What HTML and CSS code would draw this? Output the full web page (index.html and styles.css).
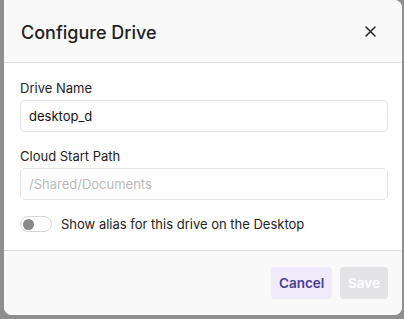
FILE: index.html
```html
<!DOCTYPE html>
<html lang="en">
<head>
  <meta charset="UTF-8">
  <meta name="viewport" content="width=device-width, initial-scale=1.0">
  <title>Configure Drive</title>
  <link rel="stylesheet" href="styles.css">
</head>
<body>
  <!-- Диалог настройки диска -->
  <div class="modal">
    <div class="modal-header">
      <h2>Configure Drive</h2>
      <button class="close-btn" aria-label="Close">
        <svg width="11" height="11" viewBox="0 0 11 11">
          <path d="M1 1 L10 10 M10 1 L1 10" stroke="#222" stroke-width="1.5" stroke-linecap="round"/>
        </svg>
      </button>
    </div>

    <div class="modal-body">
      <div class="field">
        <label for="driveName">Drive Name</label>
        <input type="text" id="driveName" value="desktop_d">
      </div>
      <div class="field">
        <label for="cloudPath">Cloud Start Path</label>
        <input type="text" id="cloudPath" placeholder="/Shared/Documents">
      </div>
      <div class="toggle-row">
        <span class="toggle"><span class="knob"></span></span>
        <span>Show alias for this drive on the Desktop</span>
      </div>
    </div>

    <div class="modal-footer">
      <button class="btn btn-cancel">Cancel</button>
      <button class="btn btn-save" disabled>Save</button>
    </div>
  </div>
</body>
</html>
```

FILE: styles.css
```css
/* Основные стили */
body {
  font-family: Inter, 'Noto Sans', sans-serif;
  margin: 0;
  padding: 0;
  background-color: #8f8f8f;
  height: 319px;
  overflow: hidden;
}

/* Окно */
.modal {
  margin-left: 4px;
  width: 398px;
  height: 315px;
  background-color: white;
  border-radius: 0 8px 8px 8px;
  overflow: hidden;
  display: flex;
  flex-direction: column;
}

.modal-header {
  background-color: #f9f9f9;
  height: 63px;
  border-bottom: 1px solid #d9d9d9;
  display: flex;
  align-items: center;
  justify-content: space-between;
  padding: 0 22px 0 17px;
  box-sizing: border-box;
}

.modal-header h2 {
  margin: 0;
  font-size: 18px;
  font-weight: 500;
  color: #222;
  padding-top: 2px;
}

.close-btn {
  border: none;
  background: none;
  padding: 4px;
  cursor: pointer;
  display: flex;
}

/* Поля */
.modal-body {
  padding: 17px 14px 0 16px;
  height: 188px;
  box-sizing: border-box;
  border-bottom: 1px solid #d9d9d9;
}

.field {
  display: flex;
  flex-direction: column;
  gap: 4px;
  margin-bottom: 16px;
}

.field label {
  font-size: 13px;
  color: #222;
}

.field input {
  height: 32px;
  box-sizing: border-box;
  border: 1px solid #e6e6e6;
  border-radius: 5px;
  padding: 0 8px;
  font-family: inherit;
  font-size: 13px;
  color: #111;
  outline: none;
}

.field input::placeholder {
  color: #b9b9b9;
}

/* Переключатель */
.toggle-row {
  display: flex;
  align-items: center;
  gap: 9px;
  font-size: 13px;
  color: #222;
  margin-top: 2px;
}

.toggle {
  width: 32px;
  height: 16px;
  border: 1px solid #d4d4d4;
  border-radius: 9px;
  box-sizing: border-box;
  display: flex;
  align-items: center;
  padding-left: 2px;
}

.knob {
  width: 11px;
  height: 11px;
  border-radius: 50%;
  background-color: #888;
}

/* Кнопки */
.modal-footer {
  flex: 1;
  background-color: #f9f9f9;
  display: flex;
  justify-content: flex-end;
  align-items: center;
  gap: 8px;
  padding: 0 14px 0 0;
}

.btn {
  height: 32px;
  border: none;
  border-radius: 4px;
  font-family: inherit;
  font-size: 13.5px;
  font-weight: 600;
  padding: 0 8px;
  cursor: pointer;
}

.btn-cancel {
  background-color: #efebfa;
  color: #4a3b98;
  width: 61px;
}

.btn-save {
  background-color: #e3e3e6;
  color: white;
  width: 48px;
}
```
